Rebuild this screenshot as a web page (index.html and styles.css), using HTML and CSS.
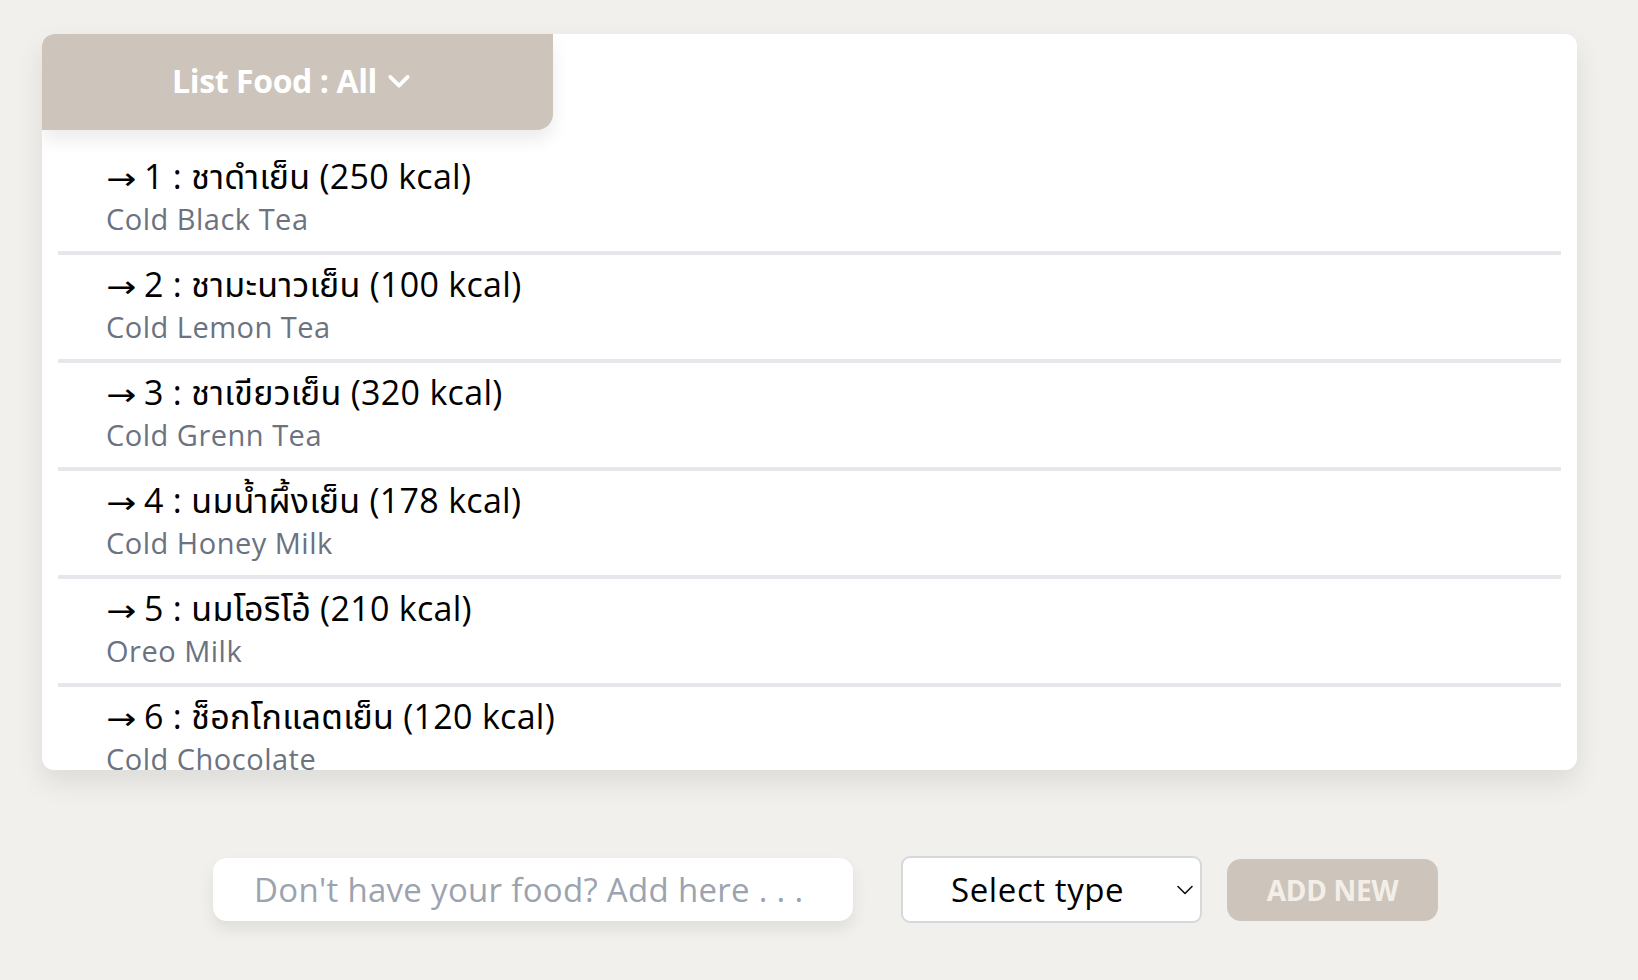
FILE: index.html
```html
<!DOCTYPE html>
<html lang="th">
<head>
<meta charset="utf-8">
<title>List Food</title>
<link rel="stylesheet" href="styles.css">
</head>
<body>
<main class="page">
  <section class="card">
    <div class="tab">
      <span class="tab-label">List Food : All</span>
      <svg class="tab-chevron" viewBox="0 0 24 24" width="28" height="28" aria-hidden="true"><path d="M4.5 8.5l7.5 7.5 7.5-7.5" fill="none" stroke="#fff" stroke-width="3.2" stroke-linecap="round" stroke-linejoin="round"/></svg>
    </div>
    <ul class="list">
      <li class="item"><div class="item-title"><span class="arrow">→</span>1 : ชาดำเย็น (250 kcal)</div><div class="item-sub">Cold Black Tea</div></li>
      <li class="item"><div class="item-title"><span class="arrow">→</span>2 : ชามะนาวเย็น (100 kcal)</div><div class="item-sub">Cold Lemon Tea</div></li>
      <li class="item"><div class="item-title"><span class="arrow">→</span>3 : ชาเขียวเย็น (320 kcal)</div><div class="item-sub">Cold Grenn Tea</div></li>
      <li class="item"><div class="item-title"><span class="arrow">→</span>4 : นมน้ำผึ้งเย็น (178 kcal)</div><div class="item-sub">Cold Honey Milk</div></li>
      <li class="item"><div class="item-title"><span class="arrow">→</span>5 : นมโอริโอ้ (210 kcal)</div><div class="item-sub">Oreo Milk</div></li>
      <li class="item"><div class="item-title"><span class="arrow">→</span>6 : ช็อกโกแลตเย็น (120 kcal)</div><div class="item-sub">Cold Chocolate</div></li>
    </ul>
  </section>
  <form class="add-row">
    <input class="add-input" type="text" placeholder="Don't have your food? Add here . . .">
    <div class="select-wrap">
      <select class="type-select">
        <option>Select type</option>
      </select>
      <svg class="select-chevron" viewBox="0 0 16 10" width="16" height="10" aria-hidden="true"><path d="M1 1.5l7 7 7-7" fill="none" stroke="#111" stroke-width="1.6" stroke-linecap="round" stroke-linejoin="round"/></svg>
    </div>
    <button class="add-btn" type="button">ADD NEW</button>
  </form>
</main>
</body>
</html>
```
FILE: styles.css
```css
html, body {
  margin: 0;
  padding: 0;
}
body {
  background: #f1f0ec;
  font-family: "Open Sans", "Noto Sans Thai", "Loma", "Garuda", "Noto Sans", sans-serif;
  height: 980px;
  overflow: hidden;
}
.page {
  padding: 34px 0 0 42px;
}
.card {
  width: 1535px;
  height: 736px;
  background: #fff;
  border-radius: 12px;
  box-shadow: 0 12px 28px rgba(0, 0, 0, 0.09);
  display: flex;
  flex-direction: column;
  overflow: hidden;
}
.tab {
  width: 511px;
  height: 96px;
  box-sizing: border-box;
  padding-right: 10px;
  flex: none;
  background: #cdc5bb;
  border-radius: 12px 0 16px 0;
  box-shadow: 0 10px 18px rgba(0, 0, 0, 0.08);
  display: flex;
  align-items: center;
  justify-content: center;
  gap: 8px;
  position: relative;
  z-index: 1;
}
.tab-label {
  color: #fff;
  font-weight: 700;
  font-size: 32px;
  letter-spacing: -0.4px;
  margin-top: -4px;
}
.tab-chevron {
  margin-top: -2px;
}
.list {
  list-style: none;
  margin: 17px 16px 0;
  padding: 0;
}
.item {
  padding: 8px 0 10px 48px;
  border-bottom: 4px solid #e5e7eb;
}
.item-title {
  height: 42px;
  font-size: 34px;
  line-height: 42px;
  color: #000;
  white-space: nowrap;
  letter-spacing: 0.3px;
}
.arrow {
  display: inline-block;
  width: 38px;
  font-family: "DejaVu Sans", sans-serif;
  font-weight: 400;
  font-size: 30px;
  line-height: 0;
  transform: scaleX(1.2);
  transform-origin: left center;
}
.item-sub {
  height: 44px;
  font-size: 29px;
  line-height: 44px;
  color: #6b7280;
  white-space: nowrap;
  letter-spacing: 0.5px;
}
.add-row {
  display: flex;
  align-items: center;
  margin: 86px 0 0 171px;
}
.add-input {
  width: 640px;
  height: 63px;
  box-sizing: border-box;
  border: none;
  border-radius: 14px;
  background: #fff;
  box-shadow: 0 8px 16px rgba(0, 0, 0, 0.08);
  padding: 0 20px 0 41px;
  font-family: inherit;
  font-size: 33px;
  letter-spacing: 0.3px;
  color: #111;
  outline: none;
}
.add-input::placeholder {
  color: #9ca3af;
}
.select-wrap {
  margin-left: 48px;
  position: relative;
  display: flex;
}
.type-select {
  -webkit-appearance: none;
  appearance: none;
  width: 301px;
  height: 67px;
  box-sizing: border-box;
  border: 2px solid #d6d8dc;
  border-radius: 9px;
  background: #fff;
  padding: 0 12px 0 48px;
  font-family: inherit;
  font-size: 33px;
  letter-spacing: 0.6px;
  color: #000;
}
.select-chevron {
  position: absolute;
  right: 9px;
  top: 29px;
  pointer-events: none;
}
.add-btn {
  margin-left: 25px;
  width: 211px;
  height: 62px;
  border: none;
  border-radius: 14px;
  background: #cdc5bb;
  color: #f3efe8;
  font-family: inherit;
  font-weight: 700;
  font-size: 28px;
  letter-spacing: -0.3px;
}
```
